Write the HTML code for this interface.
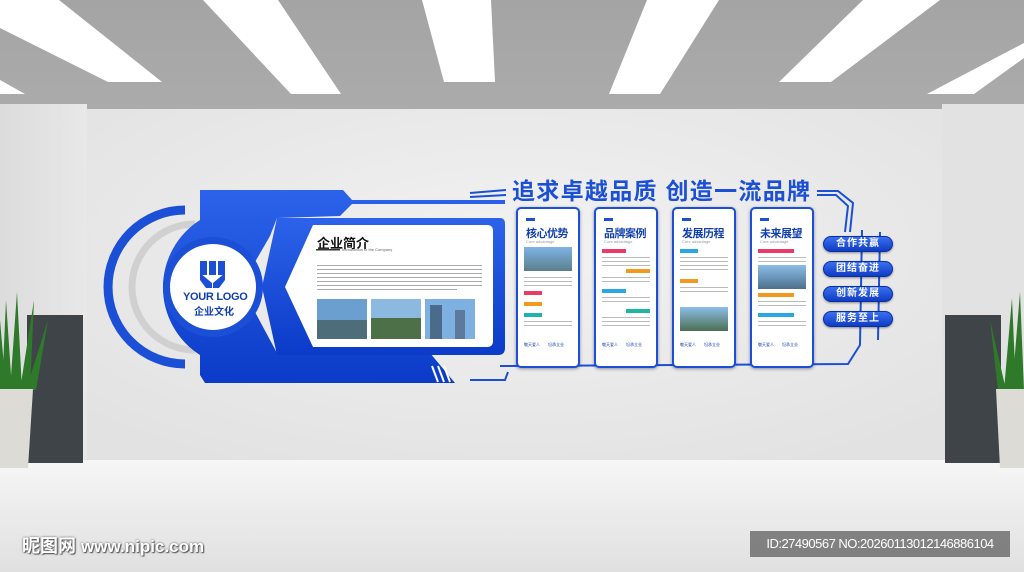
<!DOCTYPE html>
<html><head><meta charset="utf-8"><style>
*{margin:0;padding:0;box-sizing:border-box}
body{width:1024px;height:572px;overflow:hidden;position:relative;background:#e6e6e6;font-family:"Liberation Sans","Noto Sans CJK SC",sans-serif}
.abs{position:absolute}
.panel{position:absolute;top:207px;width:64px;height:161px;background:#fff;border:2px solid #1a4fd6;border-radius:5px;box-shadow:0 1px 3px rgba(0,0,40,.4)}
.panel .tag{position:absolute;left:8px;top:9px;width:9px;height:3px;background:#1a4fd6}
.panel h3{position:absolute;left:8px;top:16px;font-size:11px;color:#123fae;font-weight:bold;white-space:nowrap;letter-spacing:-0.5px}
.panel .en{position:absolute;left:8px;top:30px;font-size:4px;color:#999}
.txt{position:absolute;left:6px;right:6px;height:1px;background:#bbb}
.btn{position:absolute;left:823px;width:70px;height:16px;border-radius:8px;background:linear-gradient(#3a6ff0,#0f3cc4);border:1px solid #0a2fa0;color:#fff;font-size:10px;font-weight:bold;text-align:center;line-height:14px;letter-spacing:1px;box-shadow:0 1px 2px rgba(0,0,0,.4)}
</style></head><body>
<svg class="abs" style="left:0;top:0" width="1024" height="572">
<defs>
<linearGradient id="ceil" x1="0" y1="0" x2="0" y2="1"><stop offset="0" stop-color="#a4a4a4"/><stop offset="1" stop-color="#ababab"/></linearGradient>
<radialGradient id="wall" cx="0.5" cy="0.4" r="0.7"><stop offset="0" stop-color="#f2f2f2"/><stop offset="1" stop-color="#e2e2e2"/></radialGradient>
<linearGradient id="floor" x1="0" y1="0" x2="0" y2="1"><stop offset="0" stop-color="#f6f6f6"/><stop offset="1" stop-color="#e0e0e0"/></linearGradient>
<linearGradient id="blue" x1="0" y1="0" x2="0" y2="1"><stop offset="0" stop-color="#2c63ea"/><stop offset="1" stop-color="#0b3bc8"/></linearGradient>
<linearGradient id="side" x1="0" y1="0" x2="1" y2="0"><stop offset="0" stop-color="#dcdcdc"/><stop offset="1" stop-color="#e8e8e8"/></linearGradient>
</defs>
<rect width="1024" height="110" fill="url(#ceil)"/>
<rect x="0" y="104" width="87" height="360" fill="url(#side)"/>
<rect x="942" y="104" width="82" height="360" fill="#e2e2e2"/>
<rect x="87" y="109" width="855" height="352" fill="url(#wall)"/>
<rect x="0" y="460" width="1024" height="112" fill="url(#floor)"/>
<g fill="#fff">
<polygon points="0,0 59,0 162,82 108,82 0,28"/>
<polygon points="203,0 278,0 341,94 291,94"/>
<polygon points="422,0 491,0 495,82 444,82"/>
<polygon points="647,0 719,0 660,94 609,94"/>
<polygon points="863,0 940,0 831,82 779,82"/>
<polygon points="1024,43 1024,58 974,94 927,94"/>
<polygon points="0,80 0,94 25,94"/>
</g>
<rect x="27" y="315" width="56" height="148" fill="#3f4448"/>
<g fill="#2f7a2a"><path d="M2,390 L6,300 L12,390Z"/><path d="M10,390 L17,292 L22,390Z"/><path d="M20,390 L34,300 L30,390Z"/><path d="M26,390 L48,320 L36,390Z"/><path d="M0,390 L0,320 L6,390Z"/></g>
<path d="M0,389 L33,389 L28,468 L0,468Z" fill="#dcdbd6"/>
<rect x="945" y="315" width="56" height="148" fill="#3f4448"/>
<g fill="#2f7a2a"><path d="M1004,390 L1012,298 L1016,390Z"/><path d="M1012,390 L1020,292 L1024,390Z"/><path d="M998,390 L990,320 L1006,390Z"/></g>
<path d="M996,389 L1024,389 L1024,468 L1000,468Z" fill="#dcdbd6"/>

<path d="M185,210 A77,77 0 0 0 185,364" fill="none" stroke="#1a4fd6" stroke-width="9"/>
<path d="M195,224 A63,63 0 0 0 195,350" fill="none" stroke="#d0d0d0" stroke-width="7"/>
<path d="M200,190 L343,190 L352,200 L505,200 L505,204 L352,204 L340,216 L277,218 L270,236 L255,262 A50,50 0 0 0 255,312 L270,340 L277,353 L430,353 L455,383 L205,383 L200,375 L200,355 A80,80 0 0 1 200,220Z" fill="url(#blue)"/>
<path d="M277,218 L500,218 Q505,218 505,224 L505,348 Q505,355 498,355 L277,355 L262,287Z" fill="url(#blue)"/>
<path d="M313,225 L487,225 Q493,225 493,231 L493,341 Q493,347 487,347 L313,347 L285,287Z" fill="#fff"/>
<circle cx="213" cy="287" r="50" fill="#1a4fd6"/>
<circle cx="213" cy="287" r="43" fill="#fff"/>
<g fill="#1a4fd6"><rect x="200" y="261" width="7" height="14"/><rect x="209" y="261" width="7" height="14"/><rect x="218" y="261" width="7" height="14"/><path d="M200,273 L212,283 L212,288 L206,288 L200,280Z"/><path d="M225,273 L213,283 L213,288 L219,288 L225,280Z"/></g>
<g stroke="#fff" stroke-width="2"><line x1="432" y1="366" x2="438" y2="382"/><line x1="438" y1="366" x2="444" y2="382"/><line x1="444" y1="366" x2="450" y2="382"/></g>
<g fill="none" stroke="#1a4fd6" stroke-width="2">
<path d="M470,193 L506,190"/><path d="M470,197 L506,195"/>
<path d="M817,191 L838,191 L853,203 L850,232"/><path d="M817,195 L836,195 L848,206 L845,232"/>
<path d="M862,230 L860,345 L848,364 L500,366"/><path d="M470,380 L505,380 L508,372"/>
<path d="M880,232 L878,340"/>
</g>
<g>
<rect x="317" y="265" width="165" height="1" fill="#aaa"/><rect x="317" y="269" width="165" height="1" fill="#aaa"/><rect x="317" y="273" width="165" height="1" fill="#aaa"/><rect x="317" y="277" width="165" height="1" fill="#aaa"/><rect x="317" y="281" width="165" height="1" fill="#aaa"/><rect x="317" y="285" width="165" height="1" fill="#aaa"/><rect x="317" y="289" width="140" height="1" fill="#aaa"/>
<rect x="316" y="249" width="24" height="1.5" fill="#333"/>
</g>
<rect x="317" y="299" width="50" height="40" fill="#6b9fd0"/><rect x="317" y="320" width="50" height="19" fill="#4e6d7a"/>
<rect x="371" y="299" width="50" height="40" fill="#8cb9e0"/><rect x="371" y="318" width="50" height="21" fill="#4d7048"/>
<rect x="425" y="299" width="50" height="40" fill="#7fb0e2"/><rect x="430" y="305" width="12" height="34" fill="#4b6b8b"/><rect x="455" y="310" width="10" height="29" fill="#5d7a9c"/>
</svg>
<div class="abs" style="left:183px;top:291px;font-size:11px;font-weight:bold;color:#123fae;letter-spacing:-0.3px">YOUR LOGO</div>
<div class="abs" style="left:194px;top:303px;font-size:10px;font-weight:bold;color:#123fae">企业文化</div>
<div class="abs" style="left:317px;top:233px;font-size:13px;font-weight:bold;color:#111">企业简介</div>
<div class="abs" style="left:342px;top:247px;font-size:4px;color:#666">Introduction to the Company</div>
<div class="abs" style="left:512px;top:172px;font-size:23px;font-weight:bold;color:#1a4fd6;white-space:nowrap;letter-spacing:1.3px">追求卓越品质 创造一流品牌</div>

<div class="panel" style="left:516px"><div class="tag"></div><h3>核心优势</h3><div class="en">Core advantage</div>
<div class="abs" style="left:6px;top:38px;width:48px;height:24px;background:linear-gradient(#7fb3e6,#5a7f8c)"></div>
<div class="txt" style="top:68px"></div><div class="txt" style="top:72px"></div><div class="txt" style="top:76px"></div>
<div class="abs" style="left:6px;top:82px;width:18px;height:4px;background:#e83b6a"></div>
<div class="abs" style="left:6px;top:93px;width:18px;height:4px;background:#f39a1e"></div>
<div class="abs" style="left:6px;top:104px;width:18px;height:4px;background:#1fb5a6"></div>
<div class="txt" style="top:112px"></div><div class="txt" style="top:116px"></div>
<div class="abs" style="left:6px;top:133px;font-size:4px;color:#123fae">敬天爱人　　坦承立业</div></div>
<div class="panel" style="left:594px"><div class="tag"></div><h3>品牌案例</h3><div class="en">Core advantage</div>
<div class="abs" style="left:6px;top:40px;width:24px;height:4px;background:#e83b6a"></div>
<div class="txt" style="top:48px"></div><div class="txt" style="top:52px"></div><div class="txt" style="top:56px"></div>
<div class="abs" style="right:6px;top:60px;width:24px;height:4px;background:#f39a1e"></div>
<div class="txt" style="top:68px"></div><div class="txt" style="top:72px"></div>
<div class="abs" style="left:6px;top:80px;width:24px;height:4px;background:#2aa6e0"></div>
<div class="txt" style="top:88px"></div><div class="txt" style="top:92px"></div>
<div class="abs" style="right:6px;top:100px;width:24px;height:4px;background:#1fb5a6"></div>
<div class="txt" style="top:108px"></div><div class="txt" style="top:112px"></div><div class="txt" style="top:116px"></div>
<div class="abs" style="left:6px;top:133px;font-size:4px;color:#123fae">敬天爱人　　坦承立业</div></div>
<div class="panel" style="left:672px"><div class="tag"></div><h3>发展历程</h3><div class="en">Core advantage</div>
<div class="abs" style="left:6px;top:40px;width:18px;height:4px;background:#2aa6e0"></div>
<div class="txt" style="top:48px"></div><div class="txt" style="top:52px"></div><div class="txt" style="top:56px"></div><div class="txt" style="top:60px"></div>
<div class="abs" style="left:6px;top:70px;width:18px;height:4px;background:#f39a1e"></div>
<div class="txt" style="top:78px"></div><div class="txt" style="top:82px"></div>
<div class="abs" style="left:6px;top:98px;width:48px;height:24px;background:linear-gradient(#8cbde8,#4c6f52)"></div>
<div class="abs" style="left:6px;top:133px;font-size:4px;color:#123fae">敬天爱人　　坦承立业</div></div>
<div class="panel" style="left:750px"><div class="tag"></div><h3>未来展望</h3><div class="en">Core advantage</div>
<div class="abs" style="left:6px;top:40px;width:36px;height:4px;background:#e83b6a"></div>
<div class="txt" style="top:48px"></div><div class="txt" style="top:52px"></div>
<div class="abs" style="left:6px;top:56px;width:48px;height:24px;background:linear-gradient(#8cbde8,#4c6f8b)"></div>
<div class="abs" style="left:6px;top:84px;width:36px;height:4px;background:#f39a1e"></div>
<div class="txt" style="top:92px"></div><div class="txt" style="top:96px"></div>
<div class="abs" style="left:6px;top:104px;width:36px;height:4px;background:#2aa6e0"></div>
<div class="txt" style="top:112px"></div><div class="txt" style="top:116px"></div>
<div class="abs" style="left:6px;top:133px;font-size:4px;color:#123fae">敬天爱人　　坦承立业</div></div>

<div class="btn" style="top:236px">合作共赢</div>
<div class="btn" style="top:261px">团结奋进</div>
<div class="btn" style="top:286px">创新发展</div>
<div class="btn" style="top:311px">服务至上</div>

<div class="abs" style="left:22px;top:532px;font-size:18px;font-weight:bold;color:#fff;text-shadow:0 0 2px #555,1px 1px 1px #555;white-space:nowrap">昵图网 <span style="font-size:17px">www.nipic.com</span></div>
<div class="abs" style="left:750px;top:531px;width:260px;height:26px;background:rgba(110,110,110,.85);color:#fff;font-size:13px;line-height:26px;text-align:center;white-space:nowrap;letter-spacing:-0.5px">ID:27490567 NO:20260113012146886104</div>
</body></html>
